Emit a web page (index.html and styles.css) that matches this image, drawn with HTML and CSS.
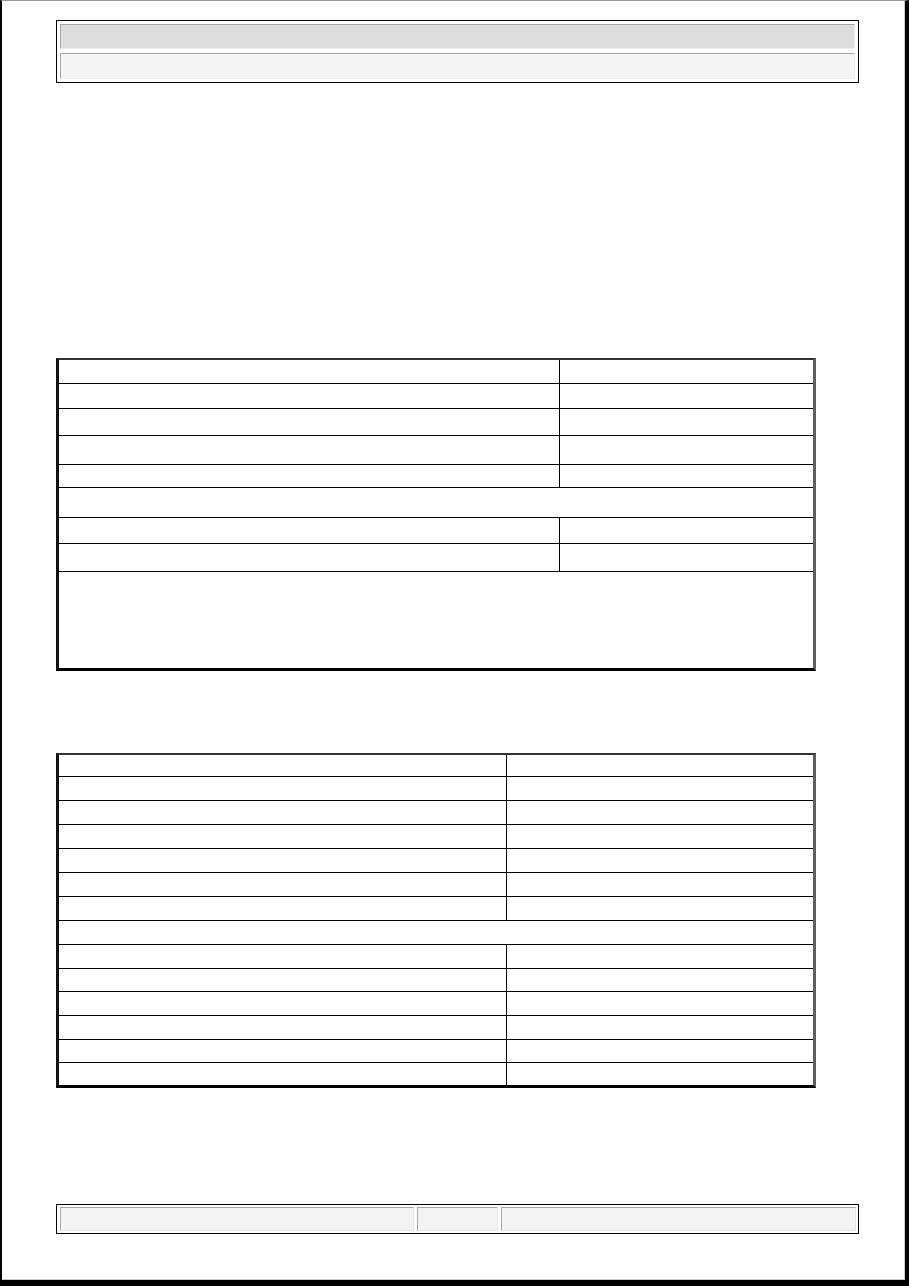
FILE: index.html
```html
<!DOCTYPE html>
<html lang="en">
<head>
<meta charset="utf-8">
<title>Document</title>
<link rel="stylesheet" href="styles.css">
</head>
<body>
<div class="page">
  <div class="header">
    <div class="hcell hcell-dark"></div>
    <div class="hcell hcell-light"></div>
  </div>

  <div class="spec spec-one">
    <div class="row r24"><div class="c1"></div><div class="c2"></div></div>
    <div class="row r25"><div class="c1"></div><div class="c2"></div></div>
    <div class="row r27"><div class="c1"></div><div class="c2"></div></div>
    <div class="row r29"><div class="c1"></div><div class="c2"></div></div>
    <div class="row r23"><div class="c1"></div><div class="c2"></div></div>
    <div class="row r30 full"><div class="c1"></div></div>
    <div class="row r26"><div class="c1"></div><div class="c2"></div></div>
    <div class="row r28"><div class="c1"></div><div class="c2"></div></div>
    <div class="row r96 full last"><div class="c1"></div></div>
  </div>

  <div class="spec spec-two">
    <div class="row r22"><div class="c1"></div><div class="c2"></div></div>
    <div class="row r24"><div class="c1"></div><div class="c2"></div></div>
    <div class="row r24"><div class="c1"></div><div class="c2"></div></div>
    <div class="row r24"><div class="c1"></div><div class="c2"></div></div>
    <div class="row r24"><div class="c1"></div><div class="c2"></div></div>
    <div class="row r24"><div class="c1"></div><div class="c2"></div></div>
    <div class="row r24"><div class="c1"></div><div class="c2"></div></div>
    <div class="row r24 full"><div class="c1"></div></div>
    <div class="row r24"><div class="c1"></div><div class="c2"></div></div>
    <div class="row r23"><div class="c1"></div><div class="c2"></div></div>
    <div class="row r24"><div class="c1"></div><div class="c2"></div></div>
    <div class="row r24"><div class="c1"></div><div class="c2"></div></div>
    <div class="row r23"><div class="c1"></div><div class="c2"></div></div>
    <div class="row r22 last"><div class="c1"></div><div class="c2"></div></div>
  </div>

  <div class="footer">
    <div class="fcell"></div>
    <div class="fcell"></div>
    <div class="fcell"></div>
  </div>
</div>
</body>
</html>
```

FILE: styles.css
```css
html, body {
  margin: 0;
  padding: 0;
  background: #ffffff;
  font-family: "Liberation Sans", Arial, sans-serif;
}

.page {
  box-sizing: border-box;
  width: 909px;
  height: 1286px;
  border-top: 1px solid #9a9a9a;
  border-left: 2px solid #000000;
  border-right: 4px solid #000000;
  border-bottom: 6px solid #000000;
  box-shadow: inset -1px -1px 0 #c8c8c8;
  background: #ffffff;
  overflow: hidden;
}

/* Header block */
.header {
  box-sizing: border-box;
  width: 803px;
  margin: 19px 0 0 54px;
  border: 1px solid #000000;
  padding: 3px 3px 3px 3px;
  display: flex;
  flex-direction: column;
  gap: 4px;
}

.hcell {
  box-sizing: border-box;
  border-top: 1px solid #a8a8a8;
  border-left: 1px solid #a8a8a8;
  border-right: 1px solid #eeeeee;
  border-bottom: 1px solid #eeeeee;
}

.hcell-dark {
  height: 25px;
  background: #dcdcdc;
}

.hcell-light {
  height: 26px;
  background: #f4f4f4;
}

/* Spec tables */
.spec {
  box-sizing: border-box;
  width: 760px;
  margin-left: 54px;
  border-top: 2px solid #333333;
  border-left: 3px solid #111111;
  border-right: 3px solid #5e5e5e;
  border-bottom: 3px solid #000000;
  display: flex;
  flex-direction: column;
}

.spec-one {
  margin-top: 275px;
}

.spec-two {
  margin-top: 82px;
}

.row {
  box-sizing: border-box;
  display: flex;
  border-bottom: 1px solid #000000;
}

.row.last {
  border-bottom: none;
}

.spec-one .c1 {
  width: 500px;
}

.spec-two .c1 {
  width: 447px;
}

.c1 {
  box-sizing: border-box;
  flex: none;
}

.c2 {
  box-sizing: border-box;
  flex: 1;
  border-left: 1px solid #000000;
}

.row.full .c1 {
  width: auto;
  flex: 1;
}

.r22 { height: 22px; }
.r23 { height: 23px; }
.r24 { height: 24px; }
.r25 { height: 25px; }
.r26 { height: 26px; }
.r27 { height: 27px; }
.r28 { height: 28px; }
.r29 { height: 29px; }
.r30 { height: 30px; }
.r96 { height: 96px; }

/* Footer block */
.footer {
  box-sizing: border-box;
  width: 803px;
  height: 30px;
  margin: 116px 0 0 54px;
  border: 1px solid #000000;
  padding: 2px 2px 2px 3px;
  display: grid;
  grid-template-columns: 354px 81px 1fr;
  column-gap: 3px;
}

.fcell {
  box-sizing: border-box;
  background: #f3f3f3;
  border-top: 1px solid #a8a8a8;
  border-left: 1px solid #a8a8a8;
  border-right: 1px solid #e6e6e6;
  border-bottom: 1px solid #e6e6e6;
}
```
